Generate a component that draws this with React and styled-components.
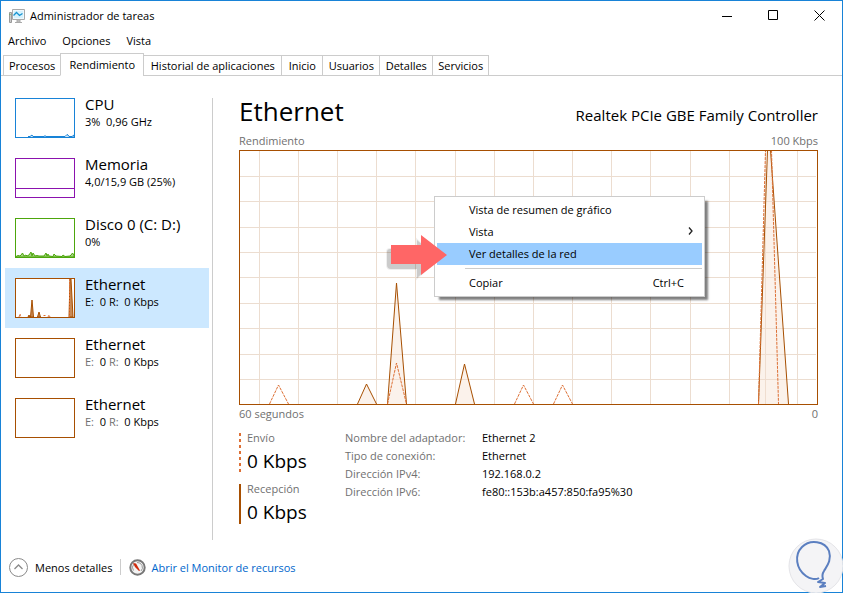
import React from "react";
import styled, { createGlobalStyle, css } from "styled-components";

const ACCENT = "#1883d7";
const BROWN = "#a74f01";
const ORANGE = "#dd7035";
const MUTED = "#707070";

const GlobalStyle = createGlobalStyle`
  *, *::before, *::after { box-sizing: border-box; }
  body { margin: 0; background: #fff; }
  body, button { font-family: "Open Sans", "Noto Sans", sans-serif; font-size: 11px; color: #000; }
  button { margin: 0; padding: 0; border: 0; background: none; text-align: left; }
  svg { display: block; flex: none; }
`;

const Window = styled.div`
  position: relative;
  display: flex;
  flex-direction: column;
  min-height: 100vh;
  border: 1px solid ${ACCENT};
  background: #fff;
  white-space: nowrap;
`;

const TitleBar = styled.header`
  display: flex;
  align-items: center;
  gap: 5px;
  height: 29px;
  padding-left: 8px;
`;

const Title = styled.h1`
  flex: 1;
  margin: 0;
  font-size: 11px;
  font-weight: 400;
`;

const WindowButtons = styled.div`
  display: flex;
`;

const WindowButton = styled.button`
  display: grid;
  place-items: center;
  width: 46px;
  height: 28px;
`;

const MenuBar = styled.nav`
  display: flex;
  align-items: center;
  gap: 16px;
  height: 20px;
  padding-left: 7px;
`;

const MenuButton = styled.button`
  font-size: 11px;
`;

const TabList = styled.div`
  display: flex;
  align-items: flex-end;
  height: 26px;
  padding-left: 2px;
  border-bottom: 1px solid #ccc;
`;

const Tab = styled.button`
  min-width: ${(p) => p.$width}px;
  height: 21px;
  margin: 0 -1px -1px 0;
  padding: 0 5px;
  border: 1px solid #ccc;
  line-height: 19px;
  text-align: center;
  ${(p) =>
    p.$active &&
    css`
      height: 23px;
      border-bottom-color: #fff;
      background: #fff;
    `}
`;

const Body = styled.div`
  display: flex;
  flex: 1;
  padding: 12px 24px 0 4px;
`;

const Sidebar = styled.nav`
  width: 204px;
  flex: none;
`;

const Resource = styled.button`
  display: flex;
  gap: 10px;
  width: 100%;
  height: 60px;
  padding: 10px;
  background: ${(p) => (p.$active ? "#cce8ff" : "transparent")};
`;

const Thumb = styled.svg`
  border: 1px solid ${(p) => p.$color};
  background: #fff;
`;

const ResourceText = styled.span`
  display: flex;
  flex-direction: column;
  margin-top: -4px;
`;

const ResourceName = styled.span`
  font-size: 15px;
  line-height: 20px;
`;

const ResourceValue = styled.span`
  line-height: 16px;
  white-space: pre;
`;

const Faded = styled.span`
  color: ${(p) => (p.$active ? "#000" : MUTED)};
`;

const Panel = styled.main`
  flex: 1;
  min-width: 0;
  margin: 10px 0 0 3px;
  padding-left: 26px;
  border-left: 1px solid #ccc;
`;

const PanelHeader = styled.div`
  display: flex;
  justify-content: space-between;
  align-items: baseline;
  height: 35px;
`;

const PanelTitle = styled.h2`
  margin: 0;
  font-size: 26px;
  line-height: 27px;
  font-weight: 400;
`;

const Adapter = styled.span`
  font-size: 15px;
`;

const ChartCaption = styled.div`
  display: flex;
  justify-content: space-between;
  align-items: ${(p) => (p.$below ? "flex-end" : "flex-start")};
  height: 17px;
  line-height: 16px;
  color: ${MUTED};
`;

const ChartArea = styled.div`
  position: relative;
  height: 255px;
  border: 1px solid ${BROWN};
`;

const ContextMenu = styled.div`
  position: absolute;
  top: 45px;
  left: 194px;
  width: 271px;
  padding: 2px;
  border: 1px solid #ccc;
  background: #fff;
  box-shadow: 4px 4px 2px -1px rgba(0, 0, 0, 0.5);
`;

const ContextItem = styled.button`
  display: flex;
  align-items: center;
  justify-content: space-between;
  width: 100%;
  height: 22px;
  padding: 0 ${(p) => (p.$arrow ? 8 : 18)}px 2px 32px;
  background: ${(p) => (p.$active ? "#99ccff" : "transparent")};
`;

const Separator = styled.hr`
  height: 1px;
  margin: 3px 0 3px 28px;
  border: 0;
  background: #ccc;
`;

const Pointer = styled.svg`
  position: absolute;
  top: 82px;
  left: 143px;
`;

const Info = styled.div`
  display: flex;
  gap: 38px;
  padding-top: 11px;
`;

const Stats = styled.div`
  display: flex;
  flex-direction: column;
  gap: 11px;
  width: 68px;
`;

const Stat = styled.div`
  display: flex;
  gap: 6px;
  height: 40px;
`;

const StatText = styled.div`
  display: flex;
  flex-direction: column;
  margin-top: -4px;
`;

const StatLabel = styled.span`
  line-height: 18px;
  color: ${MUTED};
`;

const StatValue = styled.span`
  font-size: 19px;
  line-height: 28px;
`;

const Details = styled.dl`
  display: grid;
  grid-template-columns: 137px auto;
  grid-auto-rows: 18px;
  margin: -4px 0 0;
  line-height: 18px;
`;

const Term = styled.dt`
  color: ${MUTED};
`;

const Value = styled.dd`
  margin: 0;
`;

const Footer = styled.footer`
  display: flex;
  align-items: center;
  height: 52px;
  padding: 2px 8px 0;
`;

const FooterButton = styled.button`
  display: flex;
  align-items: center;
  gap: 7px;
  height: 16px;
  padding-right: 8px;
  border-right: 1px solid #ccc;
`;

const FooterLink = styled.a`
  display: flex;
  align-items: center;
  gap: 5px;
  padding-left: 8px;
  color: #0066cc;
  text-decoration: none;
`;

const Watermark = styled.svg`
  position: absolute;
  right: -1px;
  bottom: -1px;
`;

const TABS = [
  { label: "Procesos", width: 58 },
  { label: "Rendimiento", width: 84 },
  { label: "Historial de aplicaciones", width: 139 },
  { label: "Inicio", width: 42 },
  { label: "Usuarios", width: 58 },
  { label: "Detalles", width: 54 },
  { label: "Servicios", width: 57 },
];

const RESOURCES = [
  { name: "CPU", value: "3%  0,96 GHz", color: ACCENT, kind: "cpu" },
  { name: "Memoria", value: "4,0/15,9 GB (25%)", color: "#8b12ae", kind: "memory" },
  { name: "Disco 0 (C: D:)", value: "0%", color: "#4da60c", kind: "disk" },
  { name: "Ethernet", color: BROWN, kind: "network", active: true },
  { name: "Ethernet", color: BROWN },
  { name: "Ethernet", color: BROWN },
];

const DETAILS = [
  ["Nombre del adaptador:", "Ethernet 2"],
  ["Tipo de conexión:", "Ethernet"],
  ["Dirección IPv4:", "192.168.0.2"],
  ["Dirección IPv6:", "fe80::153b:a457:850:fa95%30"],
];

const GRID_X = [20, 59, 98, 137, 176, 216, 255, 294, 333, 372, 411, 451, 490, 526, 558];
const GRID_Y = [26, 51, 77, 102, 127, 153, 178, 204, 229];
const RECEIVED = [
  "118,254 127,234 137,254",
  "148,254 157,133 167,254",
  "216,254 225,214 235,254",
  "519,254 528,0 531,0 549,254",
];
const SENT = [
  "30,254 39,235 49,254",
  "148,254 157,213 167,254",
  "275,254 284,235 294,254",
  "314,254 323,235 333,254",
  "519,254 526,0 532,0 539,254",
];

function ThumbDrawing({ kind }) {
  if (kind === "cpu")
    return (
      <path
        d="M12 37.500h2l2-1.500 1 1.500h11l1-1 1 1h12M43 37.500h6l2-2 1 .5 1 1.500h3l2-1.500v2.500H12z"
        fill="#d1e6f7"
        stroke={ACCENT}
      />
    );
  if (kind === "memory") return <path d="M0 29.500h58" stroke="#8b12ae" />;
  if (kind === "disk")
    return (
      <path
        d="M0 37.500L2 36.500 4 37 5 36 6.500 34 8 37 10 36 11 37 13 36 15 33 16 37 17 34 19 37 21 36.500 23 37 28 37 30 34 31 37 32 35 33 37 37 37.500 38 35 40 37 46 37.500 47 36 49 37.500 54 37 55 36 56.500 34 58 36V38H0z"
        fill="#a6d283"
        stroke="#4da60c"
        strokeWidth="1"
      />
    );
  if (kind === "network")
    return (
      <g fill="#c98a55" stroke={BROWN}>
        <path d="M12 38l1-2 1 2zM14.500 38l1.500-17 1.500 17zM21.500 38l1.500-5 1.500 5zM53 38l1-38h1l2 38z" />
        <path d="M3 38l1-3 1 3M27.500 36.500h3M32 38l1-2 1 2M53.500 38V0" fill="none" stroke={ORANGE} strokeDasharray="2 1" />
      </g>
    );
  return null;
}

function NetworkChart() {
  return (
    <svg width="100%" height="253" viewBox="0 0 577 253" preserveAspectRatio="none" fill="none" aria-label="Rendimiento de Ethernet">
      <g transform="translate(-1 -1)">
        <g stroke="#ecddd0" shapeRendering="crispEdges">
          {GRID_X.map((x) => (
            <path key={x} d={`M${x + 0.5} 1V254`} />
          ))}
          {GRID_Y.map((y) => (
            <path key={y} d={`M1 ${y + 0.5}H577`} />
          ))}
        </g>
        <g stroke={BROWN} fill="#f6dfcc" fillOpacity="0.4">
          {RECEIVED.map((points) => (
            <polyline key={points} points={points} transform="translate(.5 0)" />
          ))}
        </g>
        <g stroke={ORANGE} strokeDasharray="3 1">
          {SENT.map((points) => (
            <polyline key={points} points={points} transform="translate(.5 0)" />
          ))}
        </g>
      </g>
    </svg>
  );
}

function AppIcon() {
  return (
    <svg width="16" height="16" viewBox="0 0 16 16" fill="none" aria-hidden="true">
      <path d="M.5 4.500h2v10h-2z" stroke="#999" fill="#ccc" />
      <path d="M.5 6.500h1" stroke="#55b947" />
      <path d="M3.500 1.500h12v10h-12z" fill="#eef8fd" stroke="#a9a9a9" />
      <path d="M5 3h9v7H5z" fill="#d5f1fc" />
      <path d="M4.500 7.500l3-3 3 3 3-2" stroke="#1592d0" strokeWidth="1.300" />
      <path d="M8 12h3v2H8zM6 14.500h7" stroke="#aaa" fill="#ccc" />
    </svg>
  );
}

export default function App() {
  return (
    <Window>
      <GlobalStyle />
      <TitleBar>
        <AppIcon />
        <Title>Administrador de tareas</Title>
        <WindowButtons>
          <WindowButton aria-label="Minimizar">
            <svg width="11" height="11" stroke="#000"><path d="M0 6.500h10" /></svg>
          </WindowButton>
          <WindowButton aria-label="Maximizar">
            <svg width="11" height="11" fill="none" stroke="#000"><path d="M.5.500h9v9h-9z" /></svg>
          </WindowButton>
          <WindowButton aria-label="Cerrar">
            <svg width="11" height="11" stroke="#000"><path d="M.5.500l10 10M10.500.500l-10 10" /></svg>
          </WindowButton>
        </WindowButtons>
      </TitleBar>
      <MenuBar>
        <MenuButton>Archivo</MenuButton>
        <MenuButton>Opciones</MenuButton>
        <MenuButton>Vista</MenuButton>
      </MenuBar>
      <TabList role="tablist">
        {TABS.map((tab, i) => (
          <Tab key={tab.label} role="tab" aria-selected={i === 1} $active={i === 1} $width={tab.width}>
            {tab.label}
          </Tab>
        ))}
      </TabList>
      <Body>
        <Sidebar aria-label="Recursos">
          {RESOURCES.map((r, i) => (
            <Resource key={i} $active={r.active}>
              <Thumb width="60" height="40" viewBox="0 0 58 38" fill="none" $color={r.color}>
                <ThumbDrawing kind={r.kind} />
              </Thumb>
              <ResourceText>
                <ResourceName>{r.name}</ResourceName>
                <ResourceValue>
                  {r.value || (
                    <>
                      <Faded $active={r.active}>{"E:  "}</Faded>0 <Faded $active={r.active}>{"R:  "}</Faded>0 Kbps
                    </>
                  )}
                </ResourceValue>
              </ResourceText>
            </Resource>
          ))}
        </Sidebar>
        <Panel>
          <PanelHeader>
            <PanelTitle>Ethernet</PanelTitle>
            <Adapter>Realtek PCIe GBE Family Controller</Adapter>
          </PanelHeader>
          <ChartCaption>
            <span>Rendimiento</span>
            <span>100 Kbps</span>
          </ChartCaption>
          <ChartArea>
            <NetworkChart />
            <ContextMenu role="menu">
              <ContextItem role="menuitem">Vista de resumen de gráfico</ContextItem>
              <ContextItem role="menuitem" $arrow>
                Vista
                <svg width="7" height="8" fill="none" stroke="#222" strokeWidth="1.300"><path d="M2 .5l3 3.500-3 3.500" /></svg>
              </ContextItem>
              <ContextItem role="menuitem" $active>Ver detalles de la red</ContextItem>
              <Separator />
              <ContextItem role="menuitem">
                <span>Copiar</span>
                <span>Ctrl+C</span>
              </ContextItem>
            </ContextMenu>
            <Pointer width="66" height="48" viewBox="0 0 66 48" aria-hidden="true">
              <path d="M7 16h27V7l21 19-21 19v-9H8q-4 0-4-4V19q0-3 3-3z" fill="#000" opacity=".2" stroke="#000" strokeOpacity=".3" strokeWidth="2" />
              <path d="M8 12h30V2l26 20-26 20V31H8z" fill="#ff6666" />
            </Pointer>
          </ChartArea>
          <ChartCaption $below>
            <span>60 segundos</span>
            <span>0</span>
          </ChartCaption>
          <Info>
            <Stats>
              <Stat>
                <svg width="2" height="40" stroke={ORANGE} strokeWidth="2"><path d="M1 0v40" strokeDasharray="3" /></svg>
                <StatText>
                  <StatLabel>Envío</StatLabel>
                  <StatValue>0 Kbps</StatValue>
                </StatText>
              </Stat>
              <Stat>
                <svg width="2" height="40" stroke={BROWN} strokeWidth="2"><path d="M1 0v40" /></svg>
                <StatText>
                  <StatLabel>Recepción</StatLabel>
                  <StatValue>0 Kbps</StatValue>
                </StatText>
              </Stat>
            </Stats>
            <Details>
              {DETAILS.map(([term, value]) => (
                <React.Fragment key={term}>
                  <Term>{term}</Term>
                  <Value>{value}</Value>
                </React.Fragment>
              ))}
            </Details>
          </Info>
        </Panel>
      </Body>
      <Footer>
        <FooterButton>
          <svg width="19" height="19" fill="none" stroke="#8a8a8a">
            <circle cx="9.500" cy="9.500" r="9" />
            <path d="M5.500 11l4-4 4 4" strokeWidth="1.300" />
          </svg>
          Menos detalles
        </FooterButton>
        <FooterLink href="#monitor">
          <svg width="17" height="17" fill="none">
            <circle cx="8.500" cy="8.500" r="7.200" fill="#f3f3f3" stroke="#777" strokeWidth="2" />
            <path d="M4.500 11.500A5 5 0 0 1 5 5M8 3.500A5 5 0 0 1 12 12" stroke="#999" />
            <path d="M4 4l3 .5 4 7-1 .5L6 8z" fill="#cf2a0c" />
          </svg>
          Abrir el Monitor de recursos
        </FooterLink>
      </Footer>
      <Watermark width="55" height="55" viewBox="0 0 55 55" fill="none" aria-hidden="true">
        <circle cx="28" cy="28" r="27" fill="#f4f4f6" stroke="#e4e4e8" />
        <path
          d="M31 40c-3 2-9 1-13-2C8 31 6 17 14 9c8-8 23-6 27 4 3 9-2 15-5 20-2 3-2 5-1 8l-5 3 7 1-5 4 6-1"
          stroke="#5b7fc0"
          strokeWidth="2"
          strokeLinejoin="round"
        />
      </Watermark>
    </Window>
  );
}
